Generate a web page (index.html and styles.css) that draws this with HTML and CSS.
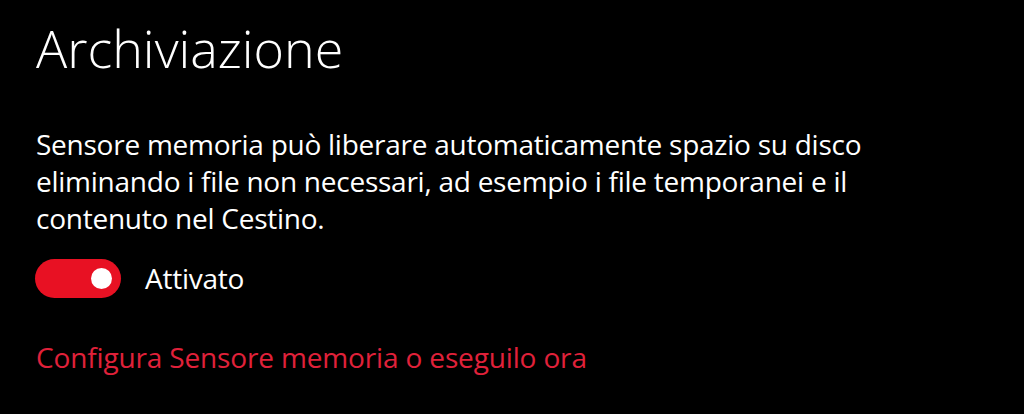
FILE: index.html
```html
<!DOCTYPE html>
<html lang="it">
<head>
<meta charset="utf-8">
<link rel="stylesheet" href="styles.css">
</head>
<body>
<main class="page">
  <h1 class="title">Archiviazione</h1>
  <p class="desc">Sensore memoria può liberare automaticamente spazio su disco eliminando i file non necessari, ad esempio i file temporanei e il contenuto nel Cestino.</p>
  <div class="toggle-row">
    <span class="toggle"><span class="knob"></span></span>
    <span class="toggle-label">Attivato</span>
  </div>
  <a class="link" href="#">Configura Sensore memoria o eseguilo ora</a>
</main>
</body>
</html>
```
FILE: styles.css
```css
html, body {
  margin: 0;
  padding: 0;
  background: #000;
  width: 1024px;
  height: 414px;
  overflow: hidden;
}
.page {
  font-family: "Open Sans", "Noto Sans", sans-serif;
  color: #fff;
  padding: 16px 0 0 36px;
  display: flex;
  flex-direction: column;
  align-items: flex-start;
}
.title {
  margin: 0;
  font-size: 52px;
  font-weight: 300;
  line-height: 64px;
}
.desc {
  margin: 46px 0 0 0;
  width: 860px;
  font-size: 28px;
  line-height: 37px;
  letter-spacing: -0.25px;
}
.toggle-row {
  display: flex;
  align-items: center;
  gap: 24px;
  margin-top: 22px;
  margin-left: -1px;
}
.toggle {
  width: 86px;
  height: 39px;
  border-radius: 20px;
  background: #e81123;
  display: flex;
  align-items: center;
  justify-content: flex-end;
  padding-right: 9px;
  box-sizing: border-box;
}
.knob {
  width: 21px;
  height: 21px;
  border-radius: 50%;
  background: #fff;
}
.toggle-label {
  font-size: 28px;
  line-height: 35px;
  letter-spacing: -0.25px;
}
.link {
  display: block;
  margin-top: 42px;
  color: #e0213a;
  text-decoration: none;
  font-size: 28px;
  line-height: 35px;
  letter-spacing: -0.15px;
}
```
